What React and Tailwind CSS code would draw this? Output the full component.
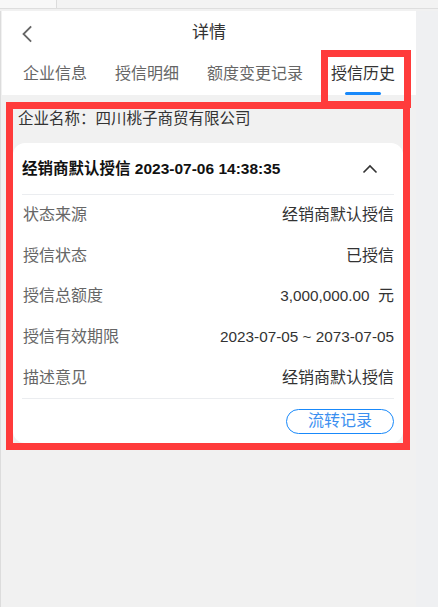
import React from 'react'

const font = { fontFamily: '"Liberation Sans", "Noto Sans CJK SC", sans-serif' }

const rows = [
  ['状态来源', <span>经销商默认授信</span>],
  ['授信状态', <span>已授信</span>],
  [
    '授信总额度',
    <span>
      <span className="text-[15.3px]">3,000,000.00&nbsp;&nbsp;</span>元
    </span>,
  ],
  ['授信有效期限', <span className="text-[15.3px]">2023-07-05 ~ 2073-07-05</span>],
  ['描述意见', <span>经销商默认授信</span>],
]

const tabs = ['企业信息', '授信明细', '额度变更记录', '授信历史']

export default function App() {
  return (
    <div
      className="relative w-[438px] h-[607px] overflow-hidden bg-[#f1f1f1] flex flex-col"
      style={font}
    >
      {/* top strip */}
      <div className="flex h-[9px] border-b border-[#dedede]">
        <div className="w-[57px] bg-[#f8f8f8] border-r border-[#dcdcdc]" />
        <div className="flex-1 bg-[#f3f3f3]" />
      </div>

      <div className="flex flex-1 pt-[2px]">
        <div className="w-[2px] border-l border-[#dcdcdc]" />
        <div className="w-[414px] flex flex-col">
          {/* header */}
          <div className="bg-white">
            <div className="relative h-[44px] flex items-center justify-center">
              <svg className="absolute left-[18px] top-[14px]" width="14" height="18" viewBox="0 0 14 18" fill="none">
                <path d="M10.5 2 L3.5 9 L10.5 16" stroke="#666" strokeWidth="1.8" strokeLinecap="square" />
              </svg>
              <span className="text-[17px] text-[#333]">详情</span>
            </div>
            <div className="flex h-[40px] pl-[21px] gap-[28px]">
              {tabs.map((t, i) => (
                <div key={t} className="relative flex items-center pb-[2px]">
                  <span className={`text-[16px] ${i === 3 ? 'text-[#333]' : 'text-[#666]'}`}>{t}</span>
                  {i === 3 && (
                    <div className="absolute left-1/2 -translate-x-1/2 bottom-0 w-[36px] h-[3px] rounded-full bg-[#1989fa]" />
                  )}
                </div>
              ))}
            </div>
          </div>

          {/* body */}
          <div className="pt-[14px] pl-[16px] text-[15.5px] text-[#333] leading-[20px]">
            企业名称：四川桃子商贸有限公司
          </div>
          <div className="mt-[14px] ml-[11px] mr-[13px] bg-white rounded-[12px] px-[9px] pb-[9px]">
            <div className="flex items-center justify-between h-[52px] border-b border-[#ebedf0]">
              <span className="text-[15.5px] font-bold text-[#111]">经销商默认授信 2023-07-06 14:38:35</span>
              <svg className="mr-[16px]" width="16" height="10" viewBox="0 0 16 10" fill="none">
                <path d="M1.5 8.5 L8 2 L14.5 8.5" stroke="#333" strokeWidth="1.6" />
              </svg>
            </div>
            <div className="border-b border-[#ebedf0]">
              {rows.map(([k, v]) => (
                <div key={k} className="flex items-center justify-between h-[40.6px] pl-[1px] text-[16px]">
                  <span className="text-[#666]">{k}</span>
                  <span className="text-[#333]">{v}</span>
                </div>
              ))}
            </div>
            <div className="flex justify-end pt-[10px]">
              <button className="w-[108px] h-[25px] rounded-full border border-[#1989fa] text-[#3b8ff0] text-[16px] leading-none">
                流转记录
              </button>
            </div>
          </div>
        </div>
        <div className="flex-1 bg-[#eff0f2]" />
      </div>

      {/* annotation boxes */}
      <div className="absolute left-[321px] top-[50px] w-[90px] h-[58px] border-[7px] border-[#ff3b3b]" />
      <div className="absolute left-[6px] top-[102px] w-[404px] h-[348px] border-[7px] border-[#ff3b3b]" />
    </div>
  )
}
